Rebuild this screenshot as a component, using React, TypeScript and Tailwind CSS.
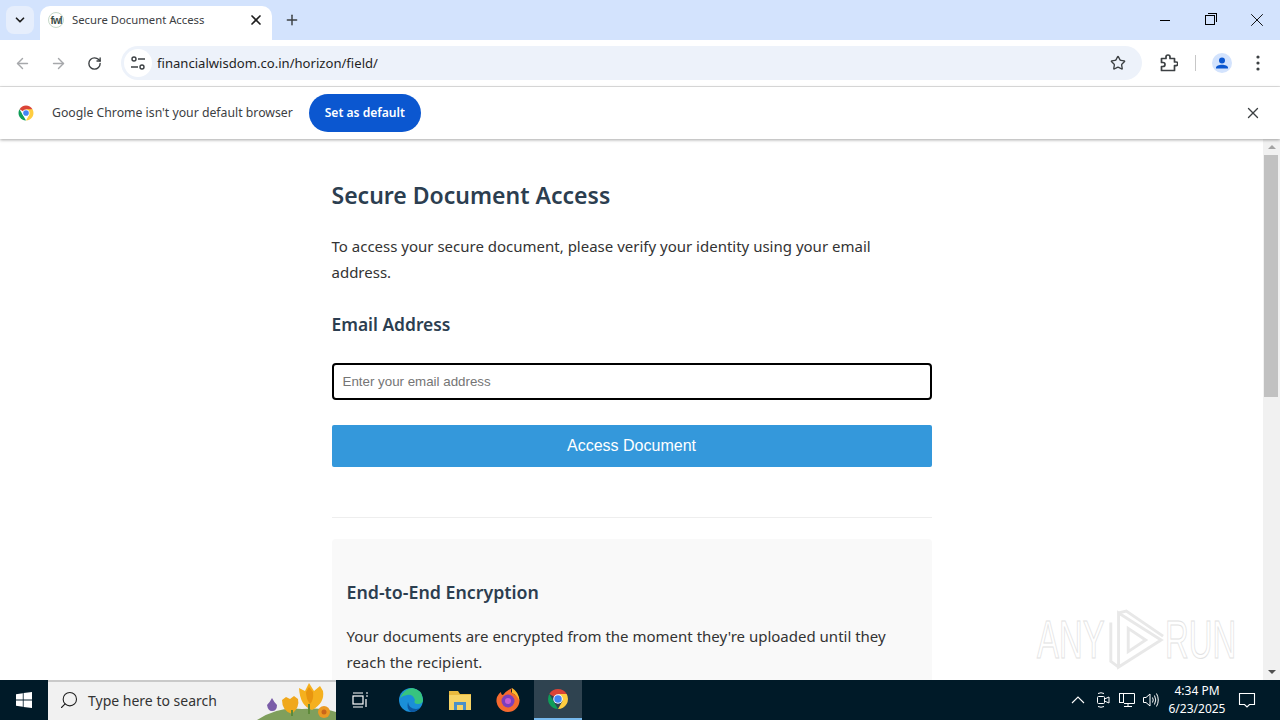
import { ArrowLeft, ArrowRight, ChevronDown, Plus, RotateCw, Search, Star, X } from "lucide-react";

const bodyFont = "font-['Noto_Sans','Open_Sans',sans-serif]";

const ChromeLogo = ({ size }: { size: number }) => (
  <svg width={size} height={size} viewBox="0 0 48 48">
    <path d="M24 24 L6.7 14 A20 20 0 0 1 41.3 14 Z" fill="#db4437" />
    <path d="M24 44 A20 20 0 0 1 6.7 14 L16 30 Z" fill="#0f9d58" />
    <path d="M41.3 14 A20 20 0 0 1 24 44 L33 28 L24 14 Z" fill="#ffcd40" />
    <circle cx="24" cy="24" r="9.5" fill="#fff" />
    <circle cx="24" cy="24" r="7.5" fill="#4285f4" />
  </svg>
);

const SiteControls = () => (
  <svg width="16" height="16" viewBox="0 0 16 16" fill="none" stroke="#3c4043" strokeWidth="1.4">
    <circle cx="4" cy="4" r="2" />
    <path d="M8 4h7M1 12h7" />
    <circle cx="12" cy="12" r="2" />
  </svg>
);

const FaviconFwl = () => (
  <div className="w-[16px] h-[16px] rounded-full border border-[#c5d8c8] flex items-center justify-center">
    <span className="text-[10px] font-bold text-[#3d4f4a] font-['Liberation_Sans',sans-serif] tracking-[-1px]">fwl</span>
  </div>
);

const ExtensionPuzzle = () => (
  <svg width="18" height="18" viewBox="0 0 18 18" fill="none" stroke="#3c4043" strokeWidth="1.7" strokeLinejoin="round">
    <path d="M1.5 4.5H6V3a2 2 0 0 1 4 0v1.5h4.5V8H16a1.8 1.8 0 0 1 0 3.6h-1.5V16.5H1.5V12.5H3a2 2 0 0 0 0-4H1.5Z" />
  </svg>
);

const ProfileIcon = () => (
  <svg width="20" height="20" viewBox="0 0 20 20">
    <circle cx="10" cy="10" r="10" fill="#d3e3fd" />
    <circle cx="10" cy="7.5" r="3" fill="#0b57d0" />
    <path d="M4 15.5v-.8c0-2 3-3 6-3s6 1 6 3v.8Z" fill="#0b57d0" />
  </svg>
);

const Kebab = () => (
  <svg width="16" height="20" viewBox="0 0 16 20" fill="#3c4043">
    <circle cx="8" cy="4" r="1.6" />
    <circle cx="8" cy="10" r="1.6" />
    <circle cx="8" cy="16" r="1.6" />
  </svg>
);

const Tulips = () => (
  <svg width="80" height="40" viewBox="0 0 80 40" className="absolute right-0 -top-[2px]">
    <path d="M1 40 Q22 26 46 29 Q66 27 80 32 V40 Z" fill="#7f9f5c" />
    <path d="M16 18 Q14 22 11 25 Q12 31 16 31 Q21 31 21 25 Q18 22 16 18 Z" fill="#7a5ca8" />
    <path d="M26 20 l4 -3 l4 2 l4 -3 l4 3 q2 8 -6 15 q-10 -3 -10 -14 Z" fill="#f0a81c" />
    <path d="M43 8 l6 3 l4 -8 l5 8 l6 -5 l3 5 q2 12 -11 19 q-12 -4 -13 -22 Z" fill="#f5b01e" />
    <path d="M50 12 l3 -5 l4 5 q1 8 -3 12 q-4 -5 -4 -12 Z" fill="#e8950f" />
    <circle cx="68" cy="32" r="6" fill="#eb9a22" />
    <circle cx="68" cy="32" r="2.5" fill="#c9651a" />
    <path d="M53 24 V34 M36 30 V36" stroke="#5e8a3a" strokeWidth="2" />
  </svg>
);

const TaskView = () => (
  <svg width="18" height="18" viewBox="0 0 18 18" fill="none" stroke="#fff" strokeWidth="1.2">
    <rect x="2" y="5" width="10" height="8" />
    <path d="M2 2h10M2 16h10M15 2h2M15 5h2M15 8v8" />
  </svg>
);

const Edge = () => (
  <svg width="26" height="26" viewBox="0 0 26 26">
    <circle cx="13" cy="13" r="12" fill="#1a8fd8" />
    <path d="M2 11 Q6 2 14 1 Q24 2 25 13 Q25 17 20 17 Q15 17 17 13 Q15 7 9 8 Q4 9 2 11 Z" fill="#37c47f" />
    <path d="M10 15 Q11 22 18 22 Q21 22 23 20 Q19 25 13 25 Q8 22 10 15 Z" fill="#0c59a4" />
  </svg>
);

const Folder = () => (
  <svg width="24" height="22" viewBox="0 0 24 22">
    <path d="M1 2h9l2 3h11v3H1Z" fill="#e8b93e" />
    <rect x="1" y="6" width="22" height="15" fill="#f6d365" />
    <rect x="6" y="13" width="12" height="8" fill="#4a90c8" />
    <rect x="9" y="16" width="6" height="5" fill="#f6d365" />
  </svg>
);

const Firefox = () => (
  <svg width="26" height="26" viewBox="0 0 26 26">
    <path d="M13 25 A11.5 11.5 0 0 1 2 10 Q4 6 6 5 Q6 8 8 8 Q11 4 17 1 Q15 4 17 6 Q24 9 24.5 14 A11.5 11.5 0 0 1 13 25Z" fill="#f56a2f" />
    <path d="M17 1 Q24 5 24.5 14 Q22 8 17 6 Z" fill="#fdb92c" />
    <circle cx="13" cy="14" r="6.5" fill="#7c3fbd" />
    <circle cx="13" cy="14" r="3" fill="#c85cd1" />
  </svg>
);

const Meet = () => (
  <svg width="16" height="18" viewBox="0 0 16 18" fill="none" stroke="#fff" strokeWidth="1">
    <rect x="2.5" y="5.5" width="7" height="7" rx="1" />
    <path d="M9.5 8 L14 6 V12 L9.5 10 M3 2.5 Q6 1 9 2.5 M3 15.5 Q6 17 9 15.5" />
  </svg>
);

const Network = () => (
  <svg width="18" height="16" viewBox="0 0 18 16" fill="none" stroke="#fff" strokeWidth="1">
    <path d="M4.5 1.5H16.5V11.5H6M10 11.5V14.5M6 14.5H14" />
    <rect x="1.5" y="1.5" width="4" height="9" fill="#001a28" />
  </svg>
);

const Speaker = () => (
  <svg width="18" height="16" viewBox="0 0 18 16" fill="none" stroke="#fff" strokeWidth="1">
    <path d="M1.5 5.5H4L8 2V14L4 10.5H1.5Z" />
    <path d="M10.5 5.5Q12 8 10.5 10.5M12.5 3.5Q15 8 12.5 12.5M14.5 1.5Q18 8 14.5 14.5" />
  </svg>
);

const ActionCenter = () => (
  <svg width="18" height="18" viewBox="0 0 18 18" fill="none" stroke="#fff" strokeWidth="1.1">
    <path d="M1.5 2.5H16.5V13.5H11.5L9 16L6.5 13.5H1.5Z" />
  </svg>
);

const App = () => {
  return (
    <div className={`w-[1280px] h-[720px] overflow-hidden flex flex-col bg-white relative ${bodyFont}`}>
      {/* tab strip */}
      <div className="h-10 shrink-0 bg-[#d3e3fd] flex items-center">
        <div className="ml-[6px] w-7 h-7 rounded-lg bg-[#e6eefc] flex items-center justify-center">
          <ChevronDown size={14} strokeWidth={3} className="text-[#1f1f1f]" />
        </div>
        <div className="ml-[6px] self-end w-[232px] h-[34px] bg-white rounded-t-[10px] flex items-center pl-[8px] pr-[8px] pb-[6px]">
          <FaviconFwl />
          <span className="ml-[8px] text-[11.3px] text-[#3c4043] flex-1">Secure Document Access</span>
          <X size={16} strokeWidth={2.5} className="text-[#1f1f1f]" />
        </div>
        <Plus size={16} strokeWidth={2.2} className="ml-[12px] text-[#3c4043]" />
        <div className="flex-1" />
        <div className="flex items-center pr-[12px]">
          <div className="w-[10px] h-px bg-black" />
          <div className="ml-[35px] w-[10px] h-[10px] border border-black relative">
            <div className="absolute -top-[3px] -right-[3px] w-[9px] h-[9px] border-t border-r border-black" />
          </div>
          <X size={22} strokeWidth={1} className="ml-[31px] text-black" />
        </div>
      </div>

      {/* toolbar */}
      <div className="h-[47px] shrink-0 bg-white border-b border-[#e3e3e3] flex items-center">
        <ArrowLeft size={17} className="ml-[14px] text-[#a6a8ab]" />
        <ArrowRight size={17} className="ml-[19px] text-[#a6a8ab]" />
        <RotateCw size={15} strokeWidth={2.2} className="ml-[20px] text-[#3c4043]" />
        <div className="ml-[19px] w-[1021px] h-[34px] rounded-full bg-[#edf2fa] flex items-center">
          <div className="ml-[3px] w-7 h-7 rounded-full bg-white flex items-center justify-center">
            <SiteControls />
          </div>
          <span className="ml-[5px] pt-[1px] text-[13.1px] text-[#1f1f1f] flex-1">financialwisdom.co.in/horizon/field/</span>
          <Star size={16} strokeWidth={2} className="mr-[16px] text-[#3c4043]" />
        </div>
        <div className="ml-[18px]"><ExtensionPuzzle /></div>
        <div className="ml-[17px] w-px h-4 bg-[#c7c7c7]" />
        <div className="ml-[16px]"><ProfileIcon /></div>
        <div className="ml-[18px]"><Kebab /></div>
      </div>

      {/* default browser bar */}
      <div className="h-[52px] shrink-0 bg-white flex items-center shadow-[0_1px_3px_rgba(0,0,0,0.35)] relative">
        <div className="ml-[17px]">
          <ChromeLogo size={18} />
        </div>
        <span className="ml-[17px] pt-[1px] text-[12.25px] text-[#3c4043]">Google Chrome isn't your default browser</span>
        <button className="ml-[16px] w-[112px] h-[38px] pt-[1px] rounded-full bg-[#0b57d0] text-white text-[12.1px] font-semibold">
          Set as default
        </button>
        <div className="flex-1" />
        <X size={18} strokeWidth={1.8} className="mr-[18px] text-[#3c4043]" />
      </div>

      {/* page */}
      <div className="flex-1 flex min-h-0">
        <div className="flex-1 overflow-hidden">
          <div className="w-[600px] mx-auto pt-[37px]">
            <h1 className="text-[23px] leading-[38px] font-semibold text-[#2c3e50]">Secure Document Access</h1>
            <p className="mt-[19px] text-[15px] leading-[26px] text-[#333]">
              To access your secure document, please verify your identity using your email address.
            </p>
            <h2 className="mt-[26px] text-[17.4px] leading-[26px] font-semibold text-[#2c3e50]">Email Address</h2>
            <div className="mt-[26px] h-[37px] border-2 border-black rounded-[4px] flex items-center pl-[9px] font-['Liberation_Sans',sans-serif] text-[13.33px] text-[#757575]">
              Enter your email address
            </div>
            <button className="mt-[25px] w-full h-[42px] rounded-[2px] bg-[#3498db] text-white text-[16px] font-['Liberation_Sans',sans-serif]">
              Access Document
            </button>
            <div className="mt-[50px] border-t border-[#eeeeee]" />
            <div className="mt-[21px] bg-[#f9f9f9] rounded-[4px] px-[15px] pt-[39px] pb-6">
              <h3 className="text-[17.8px] leading-[28px] font-semibold text-[#2c3e50]">End-to-End Encryption</h3>
              <p className="mt-[17px] text-[15px] leading-[26px] text-[#333]">
                Your documents are encrypted from the moment they're uploaded until they reach the recipient.
              </p>
            </div>
          </div>
        </div>
        <div className="w-[17px] shrink-0 bg-[#f1f1f1] flex flex-col items-center">
          <div className="h-[16px] flex items-center justify-center">
            <div className="w-0 h-0 border-x-[4px] border-x-transparent border-b-[4px] border-b-[#a3a3a3]" />
          </div>
          <div className="self-start ml-[1px] w-[14px] h-[242px] bg-[#c1c1c1]" />
          <div className="flex-1" />
          <div className="h-4 flex items-center justify-center">
            <div className="w-0 h-0 border-x-[4px] border-x-transparent border-t-[4px] border-t-[#505050]" />
          </div>
        </div>
      </div>

      {/* watermark */}
      <div className="absolute left-[1037px] top-[608px] h-[64px] flex items-center text-transparent [-webkit-text-stroke:1px_#e2e2e2] font-['Liberation_Sans',sans-serif] text-[53px] pointer-events-none">
        <span className="scale-x-[0.62] origin-left w-[68px]">ANY</span>
        <svg width="60" height="64" viewBox="0 0 62 64" fill="none" stroke="#e8e8e8" strokeWidth="3">
          <path d="M14 4 L58 32 L14 60 Z M6 14 V54 L14 60 M14 4 L22 2 L60 28 M24 20 L42 32 L24 44 Z" />
        </svg>
        <span className="scale-x-[0.62] origin-left w-[67px]">RUN</span>
      </div>

      {/* taskbar */}
      <div className="h-10 shrink-0 bg-[#001a28] flex items-center text-white">
        <div className="w-12 flex items-center justify-center">
          <svg width="16" height="16" viewBox="0 0 16 16" fill="#fff">
            <path d="M0 2.2 6.8 1.2V7.6H0ZM7.6 1.1 16 0V7.6H7.6ZM0 8.4H6.8V14.8L0 13.8ZM7.6 8.4H16V16L7.6 14.9Z" />
          </svg>
        </div>
        <div className="w-[288px] h-10 bg-[#f1f1f1] border-t-2 border-[#c9c9c9] relative flex items-center pb-[2px]">
          <Search size={20} strokeWidth={1.3} className="ml-[11px] text-[#1f1f1f] -scale-x-100" />
          <span className="ml-[9px] text-[14px] text-[#333]">Type here to search</span>
          <Tulips />
        </div>
        <div className="w-[48px] flex justify-center"><TaskView /></div>
        <div className="w-[54px] flex justify-center"><Edge /></div>
        <div className="w-[44px] flex justify-center"><Folder /></div>
        <div className="w-[52px] flex justify-center"><Firefox /></div>
        <div className="w-[48px] h-10 bg-[#2f4350] border-b-2 border-[#76b9ed] flex items-center justify-center">
          <ChromeLogo size={24} />
        </div>
        <div className="flex-1" />
        <svg width="14" height="8" viewBox="0 0 14 8" fill="none" stroke="#fff" strokeWidth="1.1" className="mr-[10px]">
          <path d="M1 7 7 1l6 6" />
        </svg>
        <div className="mr-[7px]"><Meet /></div>
        <div className="mr-[6px]"><Network /></div>
        <div className="mr-[3px]"><Speaker /></div>
        <div className="w-[68px] text-center text-[12px] leading-[18px]">
          <div>4:34 PM</div>
          <div>6/23/2025</div>
        </div>
        <div className="ml-[7px] mr-[24px]"><ActionCenter /></div>
      </div>
    </div>
  );
};

export default App;
